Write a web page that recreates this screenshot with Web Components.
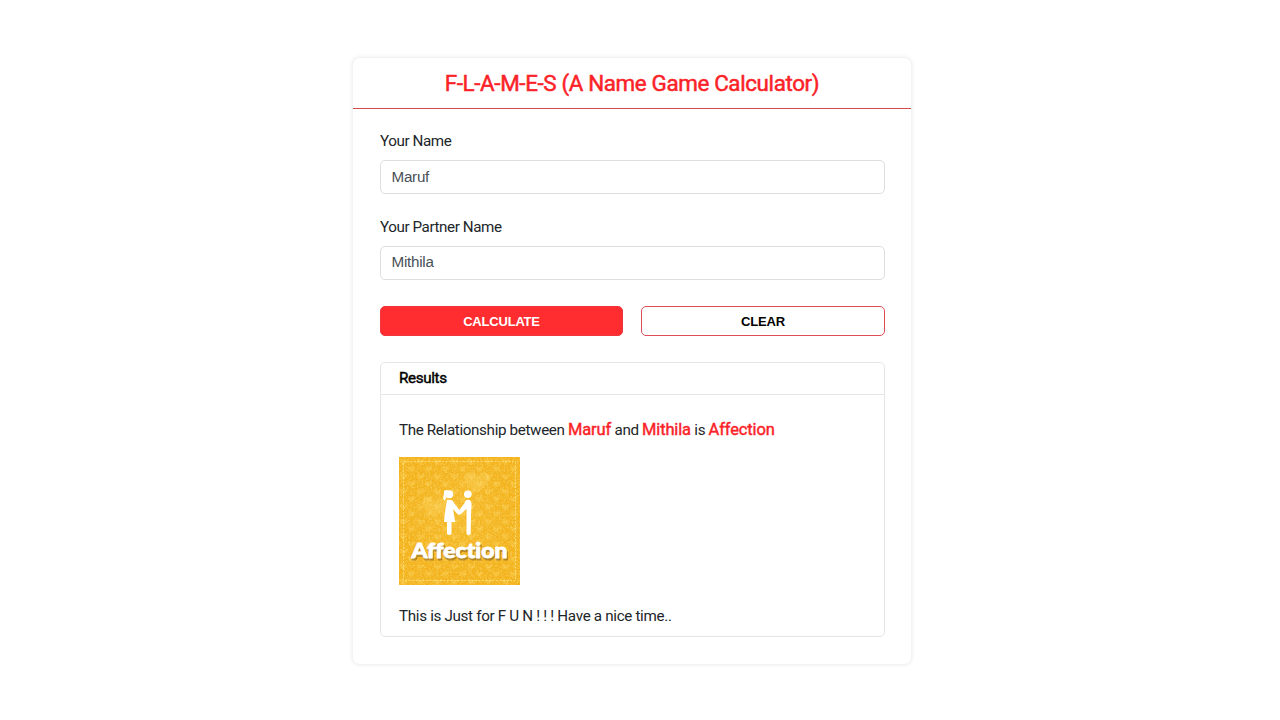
<!DOCTYPE html>
<html lang="en">
<head>
<meta charset="utf-8">
<title>F-L-A-M-E-S</title>
<style>
body{margin:0;background:#fff;font-family:Roboto,"Liberation Sans",sans-serif;font-size:15.2px;letter-spacing:-.35px;color:#212529}
</style>
</head>
<body>
<flames-app></flames-app>
<script>
const define = (name, html) => customElements.define(name, class extends HTMLElement {
  constructor() {
    super();
    const t = document.createElement('template');
    t.innerHTML = html;
    this.attachShadow({mode: 'open'}).append(t.content.cloneNode(true));
  }
});

define('flames-card', `<style>
:host{display:flex;flex-direction:column;box-sizing:border-box;width:560px;height:608px;border:1px solid #f3f3f3;border-radius:8px;box-shadow:0 0 4px rgba(0,0,0,.08);background:#fff}
header{box-sizing:border-box;height:51px;border-bottom:1px solid #d24a50;display:flex;align-items:center;justify-content:center;color:#fb2328;font-size:22.4px;letter-spacing:-.37px;line-height:26px;-webkit-text-stroke:.5px #fb2328}
main{padding:22px 26px 0 27px;display:flex;flex-direction:column}
</style><header><slot name="title"></slot></header><main><slot></slot></main>`);

define('name-field', `<style>
:host{display:block;height:85.5px}
label{display:block;line-height:20px;height:29px;letter-spacing:-.42px}
div{box-sizing:border-box;height:34px;border:1px solid #dcdee0;border-radius:5px;padding:0 11px 2px 10.5px;display:flex;align-items:center;font-family:"Liberation Sans",Arial,sans-serif;letter-spacing:-.25px;color:#495057}
</style><label><slot name="label"></slot></label><div><slot></slot></div>`);

define('action-button', `<style>
:host{display:block;flex:1 1 244px}
:host([primary]){flex-basis:243px}
button{display:block;width:100%;height:30px;margin:0;padding:0;border:1px solid #dc4b56;border-radius:5px;background:#fff;color:#000;font:bold 13px "Liberation Sans",Arial,sans-serif;letter-spacing:-.2px}
:host([primary]) button{background:#ff2d30;color:#fff;border-color:#ed363d}
</style><button><slot></slot></button>`);

define('result-panel', `<style>
:host{display:flex;flex-direction:column;box-sizing:border-box;height:275px;border:1px solid #e6e6e6;border-radius:5px;margin-top:26px}
header{box-sizing:border-box;height:32px;border-bottom:1px solid #e6e6e6;padding:0 18px 1px;display:flex;align-items:center;color:#000;-webkit-text-stroke:.45px #000}
section{padding:25px 18px 0;display:flex;flex-direction:column}
</style><header><slot name="title"></slot></header><section><slot></slot></section>`);

define('affection-picture', `<style>
:host{display:block;width:121px;height:128px}svg{display:block}
text{font:900 20px Lato,"Open Sans",sans-serif;font-variant-ligatures:none;letter-spacing:.01px}
</style><svg width="121" height="128" viewBox="0 0 121 128">
<defs>
<pattern id="hearts" width="17" height="15" patternUnits="userSpaceOnUse"><path d="M4 8C-2 3 3-1 5 4C8 0 11 4 4 8M12 15C7 11 10 7 12 11C15 7 19 11 12 15" fill="#ffd560" opacity=".35"/></pattern>
<filter id="grain" x="0" y="0" width="100%" height="100%"><feTurbulence type="fractalNoise" baseFrequency=".6" numOctaves="2" seed="4"/><feColorMatrix values="0 0 0 0 1  0 0 0 0 .84  0 0 0 0 .35  1 0 0 0 -.42"/></filter>
<radialGradient id="glow"><stop stop-color="#ffe47c" stop-opacity=".15"/><stop offset="1" stop-color="#ffe47c" stop-opacity="0"/></radialGradient>
</defs>
<rect width="121" height="128" fill="#f3b21b"/>
<rect width="121" height="128" fill="url(#hearts)"/>
<rect width="121" height="128" filter="url(#grain)"/>
<ellipse cx="60" cy="58" rx="55" ry="60" fill="url(#glow)"/>
<path d="M34 60C23 51 20 41 29 40Q34 40 36 45Q40 39 46 43C53 48 43 57 34 60M78 36C64 28 61 17 70 15Q76 14 79 20Q84 12 89 17C95 23 85 31 78 36" fill="#ffdf78" opacity=".28"/>
<rect x="4.5" y="4.5" width="112" height="119" fill="none" stroke="#ffe385" stroke-opacity=".8" stroke-dasharray="2 1.5"/>
<g fill="#fff">
<circle cx="50.3" cy="37.3" r="4"/><path d="M48.5 33Q44 32.5 45 37Q43 42 46 43.5Q47.5 41 46.8 38Z"/>
<path d="M48 43H52Q54 43 55 46L60.5 53L65.5 46Q66.5 42.7 69 42.7Q73 43 72.5 48L72 59L71.7 77Q69.5 79 67.5 77V52L61.5 57.3Q60 58.5 58.5 57L54 52L56.3 65H52.5V77Q50 79 48 77V65H45L46 55Z"/>
<circle cx="68.8" cy="37.2" r="3.8"/>
</g>
<text x="13.5" y="102.5" textLength="96" lengthAdjust="spacingAndGlyphs" fill="#8b6722" stroke="#8b6722" stroke-width="1.2" opacity=".6">Affection</text>
<text x="12.5" y="101.3" textLength="96" lengthAdjust="spacingAndGlyphs" fill="#fff" stroke="#fff" stroke-width=".8" stroke-linejoin="round">Affection</text>
</svg>`);

define('flames-app', `<style>
:host{display:flex;justify-content:center;box-sizing:border-box;height:720px;padding:57px 16px 0 0}
.actions{display:flex;gap:18px;margin-top:4px}
p{margin:0;line-height:20px;white-space:nowrap}
p:last-child{letter-spacing:-.32px}
b{font-weight:400;font-size:16.5px;letter-spacing:-.15px;color:#fb2328;-webkit-text-stroke:.45px #fb2328}
affection-picture{margin:17px 0 21px}
</style>
<flames-card><span slot="title">F-L-A-M-E-S (A Name Game Calculator)</span>
<name-field><span slot="label">Your Name</span>Maruf</name-field>
<name-field><span slot="label">Your Partner Name</span>Mithila</name-field>
<div class="actions"><action-button primary>CALCULATE</action-button><action-button>CLEAR</action-button></div>
<result-panel><span slot="title">Results</span>
<p>The Relationship between <b>Maruf</b> and <b>Mithila</b> is <b>Affection</b></p>
<affection-picture></affection-picture>
<p>This is Just for F U N ! ! ! Have a nice time..</p>
</result-panel></flames-card>`);
</script>
</body>
</html>
